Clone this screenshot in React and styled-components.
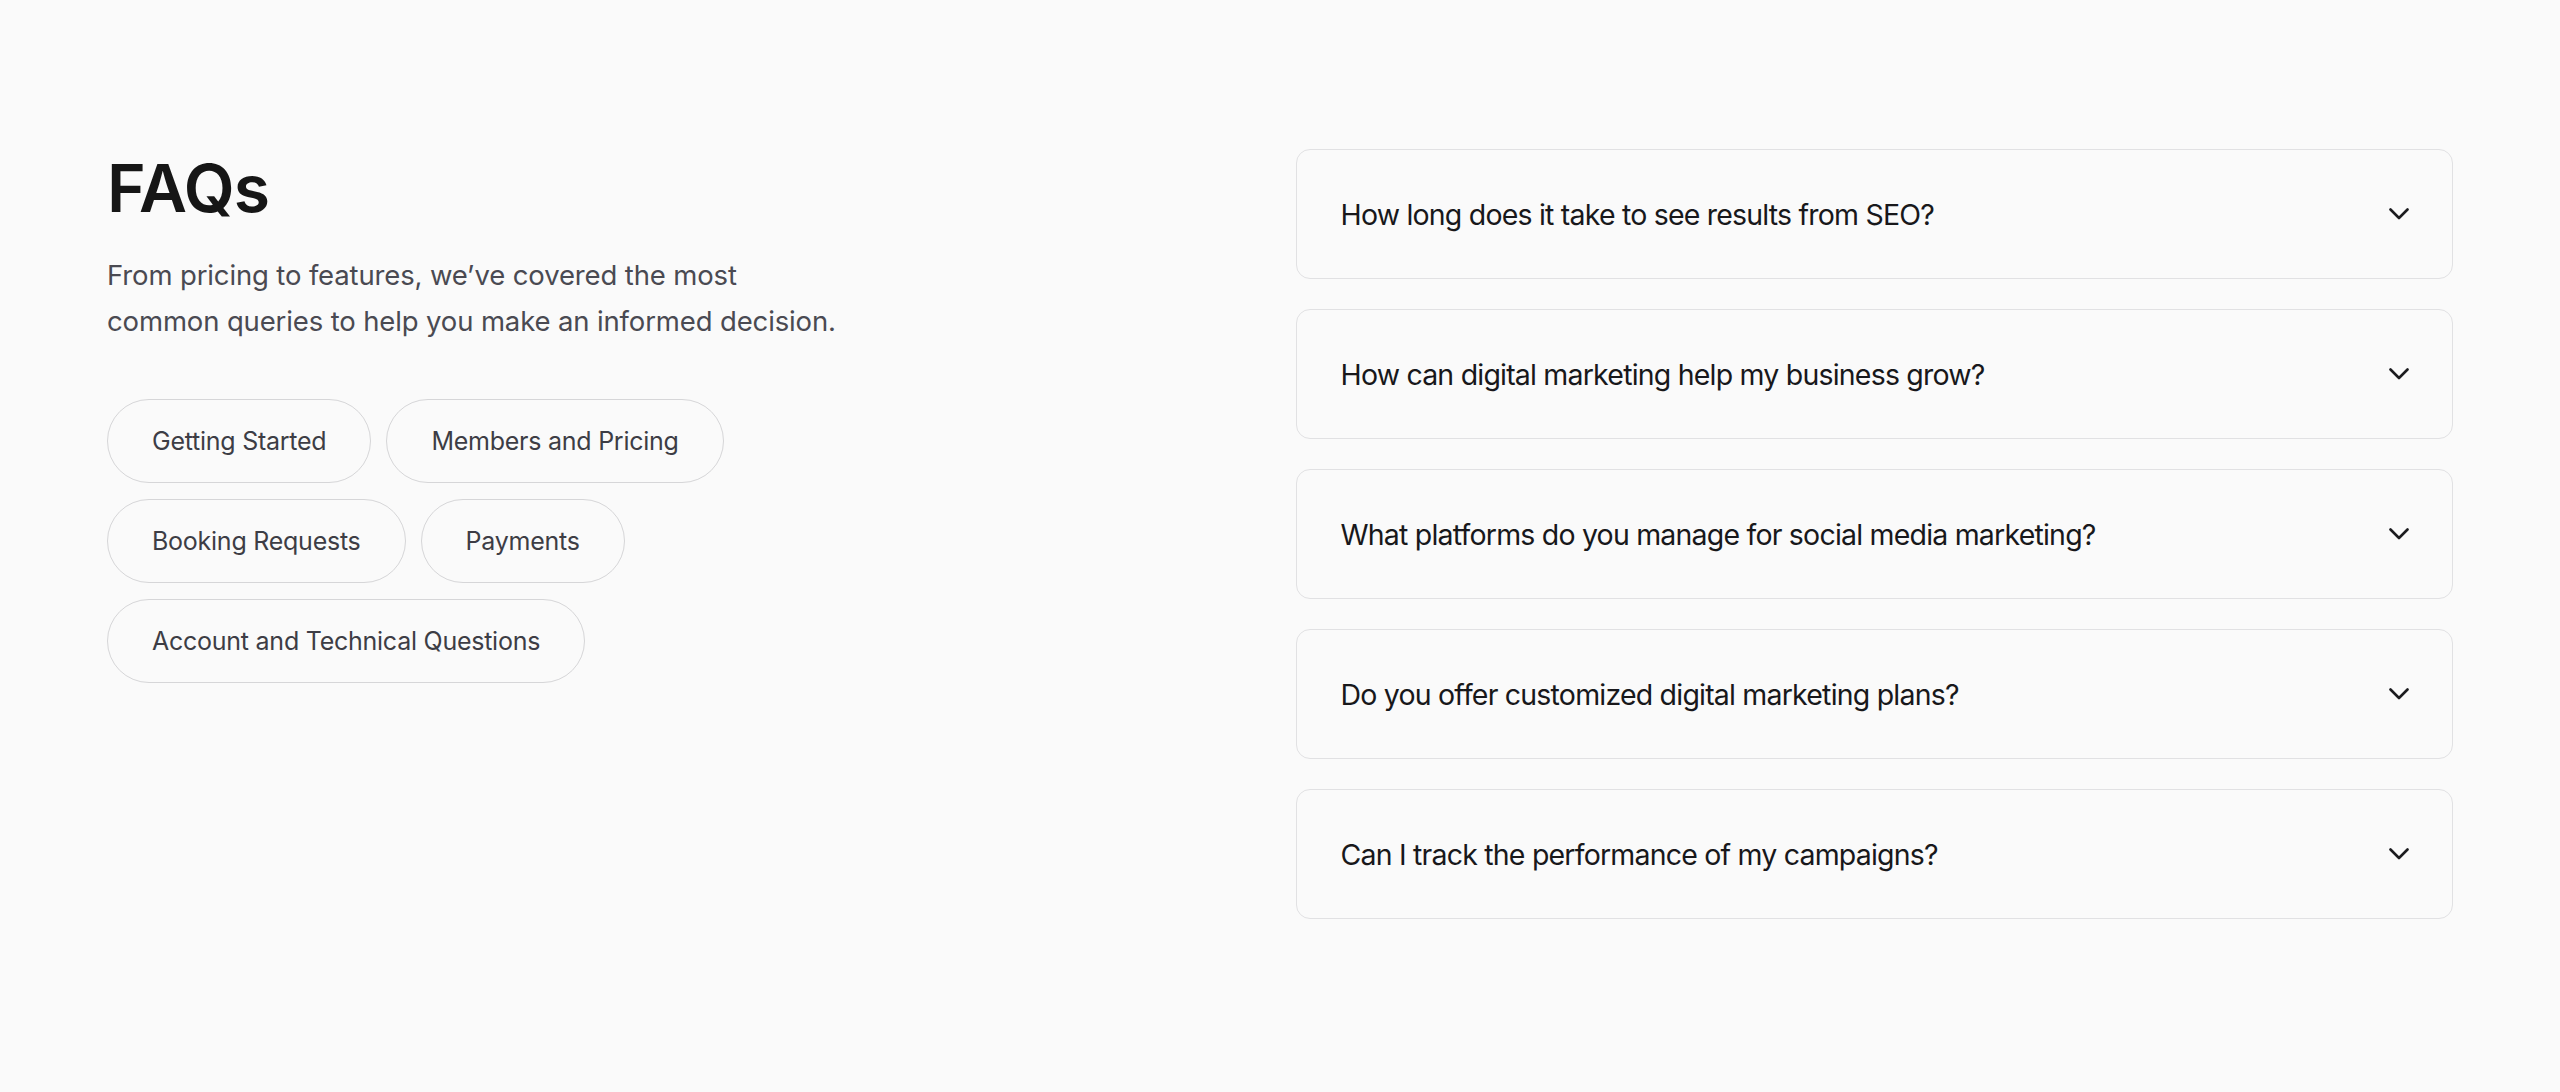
import styled, { createGlobalStyle } from 'styled-components';

const GlobalStyle = createGlobalStyle`
  html, body {
    margin: 0;
    padding: 0;
    background: #fafafa;
  }
  body {
    font-family: Inter, "Noto Sans", "Liberation Sans", sans-serif;
    -webkit-font-smoothing: antialiased;
  }
  * {
    box-sizing: border-box;
  }
`;

const Section = styled.section`
  min-height: 1092px;
  padding: 149px 107px 0;
  display: grid;
  grid-template-columns: 1fr 1fr;
  column-gap: 31px;
  align-items: start;
`;

const Intro = styled.div`
  display: flex;
  flex-direction: column;
  padding-top: 3px;
`;

const Title = styled.h1`
  margin: 0;
  font-size: 66px;
  line-height: 1.1;
  font-weight: 600;
  letter-spacing: -0.012em;
  color: #161616;
`;

const Lead = styled.p`
  margin: 27px 0 0;
  font-size: 27.5px;
  line-height: 46px;
  font-weight: 400;
  letter-spacing: -0.005em;
  color: #4a4a52;
`;

const Pills = styled.div`
  margin-top: 55px;
  max-width: 800px;
  display: flex;
  flex-wrap: wrap;
  gap: 16px 15px;
`;

const Pill = styled.button`
  height: 84px;
  padding: 0 44px;
  border: 1.5px solid #d6d6d8;
  border-radius: 999px;
  background: transparent;
  font-family: inherit;
  font-size: 25px;
  font-weight: 400;
  letter-spacing: -0.01em;
  color: #3d3d45;
  cursor: pointer;
`;

const List = styled.div`
  display: flex;
  flex-direction: column;
  gap: 30px;
`;

const Item = styled.div`
  height: 130px;
  padding: 0 43px 0 44px;
  border: 1.5px solid #e1e1e3;
  border-radius: 14px;
  background: #fafafa;
  display: flex;
  align-items: center;
  justify-content: space-between;
`;

const Question = styled.span`
  font-size: 28.5px;
  font-weight: 400;
  letter-spacing: -0.028em;
  color: #18181b;
`;

function Chevron() {
  return (
    <svg width="20" height="12" viewBox="0 0 20 12" fill="none">
      <path
        d="M1.5 1.5 L10 10 L18.5 1.5"
        stroke="#1c1c1f"
        strokeWidth="2.6"
        strokeLinecap="round"
        strokeLinejoin="round"
      />
    </svg>
  );
}

const topics = [
  'Getting Started',
  'Members and Pricing',
  'Booking Requests',
  'Payments',
  'Account and Technical Questions',
];

const questions = [
  'How long does it take to see results from SEO?',
  'How can digital marketing help my business grow?',
  'What platforms do you manage for social media marketing?',
  'Do you offer customized digital marketing plans?',
  'Can I track the performance of my campaigns?',
];

export default function App() {
  return (
    <>
      <GlobalStyle />
      <Section>
        <Intro>
          <Title>FAQs</Title>
          <Lead>
            From pricing to features, we’ve covered the most
            <br />
            common queries to help you make an informed decision.
          </Lead>
          <Pills>
            {topics.map((t) => (
              <Pill key={t}>{t}</Pill>
            ))}
          </Pills>
        </Intro>
        <List>
          {questions.map((q) => (
            <Item key={q}>
              <Question>{q}</Question>
              <Chevron />
            </Item>
          ))}
        </List>
      </Section>
    </>
  );
}
